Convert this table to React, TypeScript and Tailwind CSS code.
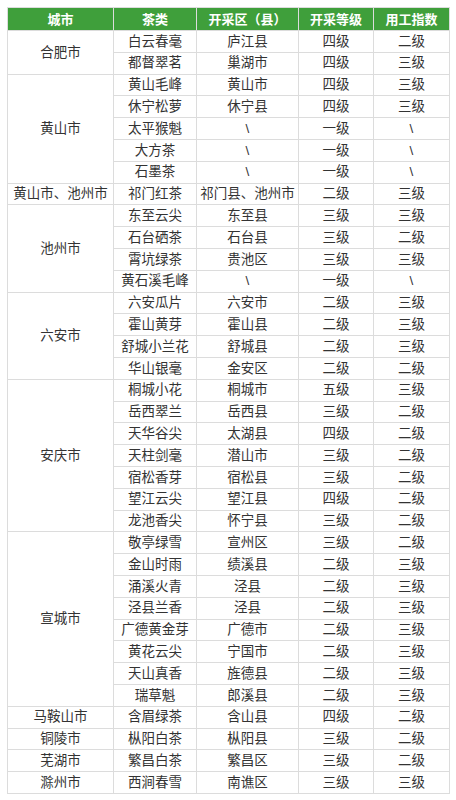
import React from "react";

type Tea = [string, string, string, string];

const groups: { city: string; teas: Tea[] }[] = [
  {
    city: "合肥市",
    teas: [
      ["白云春毫", "庐江县", "四级", "二级"],
      ["都督翠茗", "巢湖市", "四级", "三级"],
    ],
  },
  {
    city: "黄山市",
    teas: [
      ["黄山毛峰", "黄山市", "四级", "三级"],
      ["休宁松萝", "休宁县", "四级", "三级"],
      ["太平猴魁", "\\", "一级", "\\"],
      ["大方茶", "\\", "一级", "\\"],
      ["石墨茶", "\\", "一级", "\\"],
    ],
  },
  {
    city: "黄山市、池州市",
    teas: [["祁门红茶", "祁门县、池州市", "二级", "三级"]],
  },
  {
    city: "池州市",
    teas: [
      ["东至云尖", "东至县", "三级", "三级"],
      ["石台硒茶", "石台县", "三级", "二级"],
      ["霄坑绿茶", "贵池区", "三级", "三级"],
      ["黄石溪毛峰", "\\", "一级", "\\"],
    ],
  },
  {
    city: "六安市",
    teas: [
      ["六安瓜片", "六安市", "二级", "三级"],
      ["霍山黄芽", "霍山县", "二级", "三级"],
      ["舒城小兰花", "舒城县", "二级", "三级"],
      ["华山银毫", "金安区", "二级", "二级"],
    ],
  },
  {
    city: "安庆市",
    teas: [
      ["桐城小花", "桐城市", "五级", "三级"],
      ["岳西翠兰", "岳西县", "三级", "二级"],
      ["天华谷尖", "太湖县", "四级", "二级"],
      ["天柱剑毫", "潜山市", "三级", "二级"],
      ["宿松香芽", "宿松县", "三级", "二级"],
      ["望江云尖", "望江县", "四级", "二级"],
      ["龙池香尖", "怀宁县", "三级", "二级"],
    ],
  },
  {
    city: "宣城市",
    teas: [
      ["敬亭绿雪", "宣州区", "三级", "二级"],
      ["金山时雨", "绩溪县", "二级", "三级"],
      ["涌溪火青", "泾县", "二级", "三级"],
      ["泾县兰香", "泾县", "二级", "三级"],
      ["广德黄金芽", "广德市", "二级", "三级"],
      ["黄花云尖", "宁国市", "二级", "三级"],
      ["天山真香", "旌德县", "二级", "三级"],
      ["瑞草魁", "郎溪县", "二级", "三级"],
    ],
  },
  { city: "马鞍山市", teas: [["含眉绿茶", "含山县", "四级", "二级"]] },
  { city: "铜陵市", teas: [["枞阳白茶", "枞阳县", "三级", "二级"]] },
  { city: "芜湖市", teas: [["繁昌白茶", "繁昌区", "三级", "二级"]] },
  { city: "滁州市", teas: [["西涧春雪", "南谯区", "三级", "三级"]] },
];

const headers = ["城市", "茶类", "开采区（县）", "开采等级", "用工指数"];
const widths = ["w-[106px]", "w-[83px]", "w-[102px]", "w-[75px]", "w-[76px]"];

const cell = "border border-[#dcdcdc] text-center p-0 align-middle";

export default function App() {
  return (
    <div
      className="min-h-screen bg-white p-[7px] text-[#333]"
      style={{ fontFamily: '"Liberation Sans", "Noto Sans CJK SC", sans-serif' }}
    >
      <table className="w-[442px] border-collapse table-fixed text-[13.5px] leading-none">
        <colgroup>
          {widths.map((w, i) => (
            <col key={i} className={w} />
          ))}
        </colgroup>
        <thead>
          <tr className="h-[23px] bg-[#3f9f3b]">
            {headers.map((h) => (
              <th key={h} className={`${cell} text-white font-bold text-[13px] border-[#cfe3cd]`}>
                {h}
              </th>
            ))}
          </tr>
        </thead>
        <tbody>
          {groups.map((g) =>
            g.teas.map((t, i) => (
              <tr key={g.city + t[0]} className="h-[21.8px]">
                {i === 0 && (
                  <td rowSpan={g.teas.length} className={cell}>
                    {g.city}
                  </td>
                )}
                {t.map((v, j) => (
                  <td key={j} className={cell}>
                    {v}
                  </td>
                ))}
              </tr>
            ))
          )}
        </tbody>
      </table>
    </div>
  );
}
